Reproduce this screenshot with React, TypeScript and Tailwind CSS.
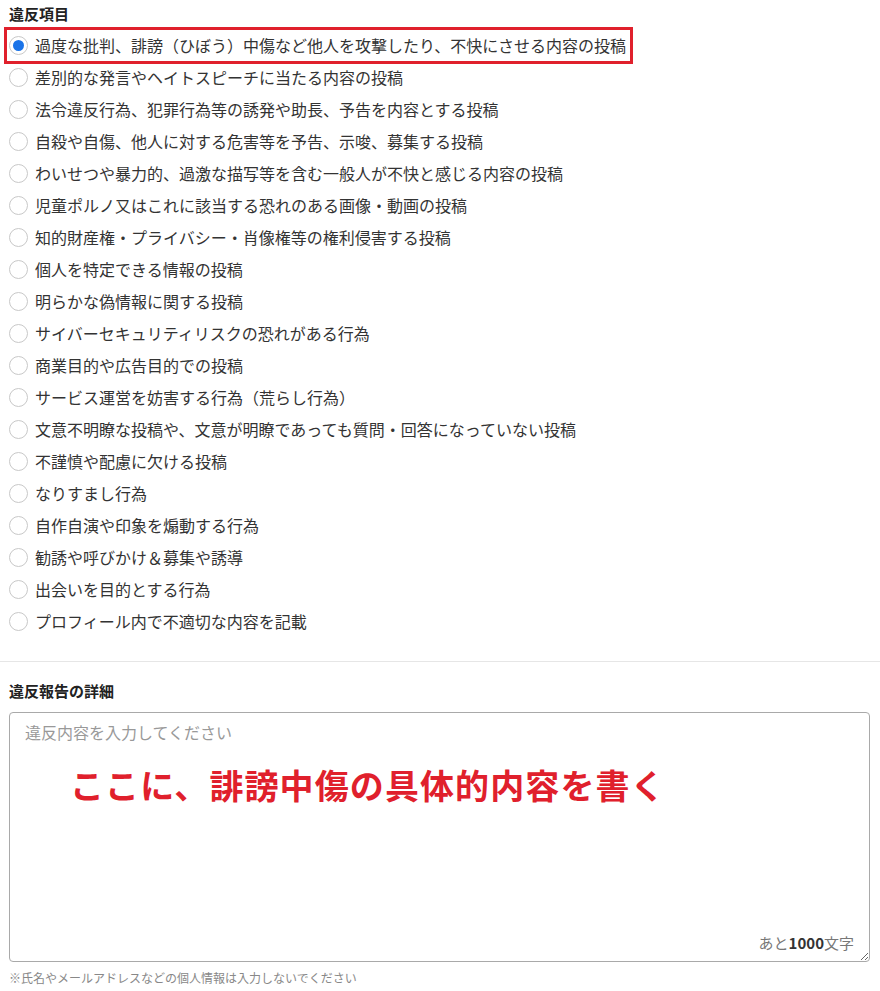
import React, { useState } from 'react';

const items = [
  '過度な批判、誹謗（ひぼう）中傷など他人を攻撃したり、不快にさせる内容の投稿',
  '差別的な発言やヘイトスピーチに当たる内容の投稿',
  '法令違反行為、犯罪行為等の誘発や助長、予告を内容とする投稿',
  '自殺や自傷、他人に対する危害等を予告、示唆、募集する投稿',
  'わいせつや暴力的、過激な描写等を含む一般人が不快と感じる内容の投稿',
  '児童ポルノ又はこれに該当する恐れのある画像・動画の投稿',
  '知的財産権・プライバシー・肖像権等の権利侵害する投稿',
  '個人を特定できる情報の投稿',
  '明らかな偽情報に関する投稿',
  'サイバーセキュリティリスクの恐れがある行為',
  '商業目的や広告目的での投稿',
  'サービス運営を妨害する行為（荒らし行為）',
  '文意不明瞭な投稿や、文意が明瞭であっても質問・回答になっていない投稿',
  '不謹慎や配慮に欠ける投稿',
  'なりすまし行為',
  '自作自演や印象を煽動する行為',
  '勧誘や呼びかけ＆募集や誘導',
  '出会いを目的とする行為',
  'プロフィール内で不適切な内容を記載',
];

const Radio: React.FC<{ checked: boolean }> = ({ checked }) => (
  <span className="w-[19px] h-[19px] rounded-full border border-[#c8c8c8] bg-white flex items-center justify-center shrink-0">
    {checked && <span className="w-[11px] h-[11px] rounded-full bg-[#1a73e8]" />}
  </span>
);

export default function App() {
  const [selected, setSelected] = useState(0);
  const [detail, setDetail] = useState('');

  return (
    <div
      className="w-[880px] h-[991px] bg-white text-[#333] overflow-hidden"
      style={{ fontFamily: '"Noto Sans CJK JP", "Noto Sans", sans-serif' }}
    >
      <div className="px-[9px]">
        <h3 className="h-[29px] flex items-center text-[15px] font-bold text-[#222] leading-none pb-[3px]">違反項目</h3>
        <div className="flex flex-col">
          {items.map((label, i) => (
            <div key={i} className="h-8 flex items-center">
              <label
                className="relative inline-flex items-center gap-[7px] cursor-pointer"
                onClick={() => setSelected(i)}
              >
                <Radio checked={selected === i} />
                <span className="text-[16px] leading-none">{label}</span>
                {i === 0 && (
                  <span className="absolute -left-[5px] -right-[7px] -top-[9px] -bottom-[9px] border-[3px] border-[#e0202c] pointer-events-none" />
                )}
              </label>
            </div>
          ))}
        </div>
      </div>

      <div className="mt-[24px] border-t border-[#e6e6e6]" />

      <div className="px-[9px]">
        <h3 className="h-[56px] flex items-center pt-[1px] text-[15px] font-bold text-[#222] leading-none">違反報告の詳細</h3>
        <div className="relative -mt-[6px] mr-[1px]">
          <textarea
            value={detail}
            onChange={(e) => setDetail(e.target.value)}
            placeholder="違反内容を入力してください"
            className="block w-full h-[250px] rounded-[4px] border border-[#a9a9a9] px-[15px] py-[8px] text-[16px] leading-[22px] placeholder:text-[#999] outline-none resize-y"
          />
          <div className="absolute left-[61px] top-[56px] text-[34px] font-bold text-[#e0202c] leading-none pointer-events-none tracking-[1.1px]">
            ここに、誹謗中傷の具体的内容を書く
          </div>
          <div className="absolute right-[16px] bottom-[12px] text-[15px] text-[#777] leading-none pointer-events-none">
            あと<span className="font-bold text-[#333]">1000</span>文字
          </div>
        </div>
        <p className="mt-[10px] text-[12px] text-[#888] leading-none">※氏名やメールアドレスなどの個人情報は入力しないでください</p>
      </div>
    </div>
  );
}
